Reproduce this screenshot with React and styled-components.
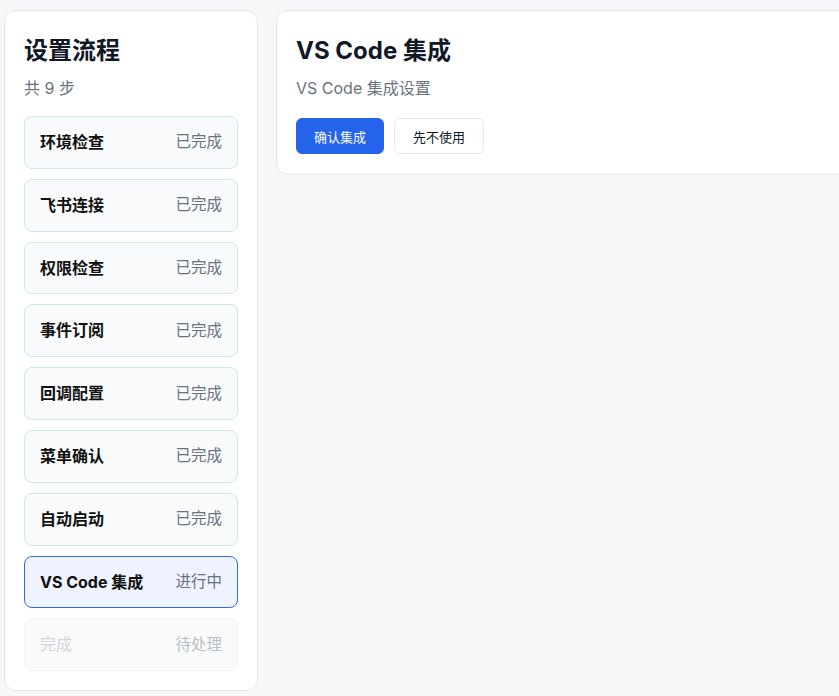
import React from "react";
import styled, { createGlobalStyle } from "styled-components";

const Global = createGlobalStyle`
  html, body { margin: 0; padding: 0; background: #f6f7f9; overflow: hidden; }
  body { font-family: Inter, "Noto Sans CJK SC", sans-serif; color: #111827; }
  * { box-sizing: border-box; }
`;

const Layout = styled.div`
  display: flex;
  align-items: flex-start;
  gap: 18px;
  padding: 10px 0 0 4px;
`;

const Card = styled.section`
  background: #ffffff;
  border: 1px solid #e5e7eb;
  border-radius: 12px;
  padding: 19px;
`;

const Sidebar = styled(Card)`
  width: 254px;
  flex: none;
`;

const Main = styled(Card)`
  width: 620px;
  flex: none;
  padding-bottom: 20px;
`;

const Title = styled.h2`
  margin: 3px 0 0;
  font-size: 24px;
  line-height: 36px;
  font-weight: 700;
  color: #111827;
`;

const Sub = styled.p`
  margin: 7px 0 0;
  font-size: 16px;
  line-height: 24px;
  color: #6b7280;
`;

const StepList = styled.div`
  display: flex;
  flex-direction: column;
  gap: 10px;
  margin-top: 16px;
`;

const stepStyles = {
  done: { bg: "#f8fafc", border: "#cfe9df", label: "#111111", status: "#6b7280", weight: 700 },
  active: { bg: "#eef3ff", border: "#2f6be6", label: "#111111", status: "#6b7280", weight: 700 },
  pending: { bg: "#f9fafb", border: "#f3f4f6", label: "#d3d6db", status: "#b9bdc3", weight: 400 },
};

const Step = styled.div`
  display: flex;
  align-items: center;
  justify-content: space-between;
  padding: 15px 15px;
  border-radius: 8px;
  border: 1px solid ${(p) => stepStyles[p.$state].border};
  background: ${(p) => stepStyles[p.$state].bg};
`;

const StepLabel = styled.span`
  font-size: 16px;
  line-height: 1.3;
  font-weight: ${(p) => stepStyles[p.$state].weight};
  color: ${(p) => stepStyles[p.$state].label};
`;

const StepStatus = styled.span`
  font-size: 15.5px;
  line-height: 1.3;
  color: ${(p) => stepStyles[p.$state].status};
`;

const Actions = styled.div`
  display: flex;
  gap: 10px;
  margin-top: 18px;
`;

const Button = styled.button`
  height: 36px;
  padding: 0 ${(p) => (p.$primary ? 17 : 18)}px;
  border-radius: 6px;
  font-family: inherit;
  font-size: 13px;
  cursor: pointer;
  border: 1px solid ${(p) => (p.$primary ? "#2563eb" : "#e5e7eb")};
  background: ${(p) => (p.$primary ? "#2563eb" : "#ffffff")};
  color: ${(p) => (p.$primary ? "#ffffff" : "#111827")};
`;

const steps = [
  ["环境检查", "done"],
  ["飞书连接", "done"],
  ["权限检查", "done"],
  ["事件订阅", "done"],
  ["回调配置", "done"],
  ["菜单确认", "done"],
  ["自动启动", "done"],
  ["VS Code 集成", "active"],
  ["完成", "pending"],
];

const statusText = { done: "已完成", active: "进行中", pending: "待处理" };

export default function App() {
  return (
    <>
      <Global />
      <Layout>
        <Sidebar>
          <Title>设置流程</Title>
          <Sub>共 9 步</Sub>
          <StepList>
            {steps.map(([label, state]) => (
              <Step key={label} $state={state}>
                <StepLabel $state={state}>{label}</StepLabel>
                <StepStatus $state={state}>{statusText[state]}</StepStatus>
              </Step>
            ))}
          </StepList>
        </Sidebar>
        <Main>
          <Title>VS Code 集成</Title>
          <Sub>VS Code 集成设置</Sub>
          <Actions>
            <Button $primary>确认集成</Button>
            <Button>先不使用</Button>
          </Actions>
        </Main>
      </Layout>
    </>
  );
}
